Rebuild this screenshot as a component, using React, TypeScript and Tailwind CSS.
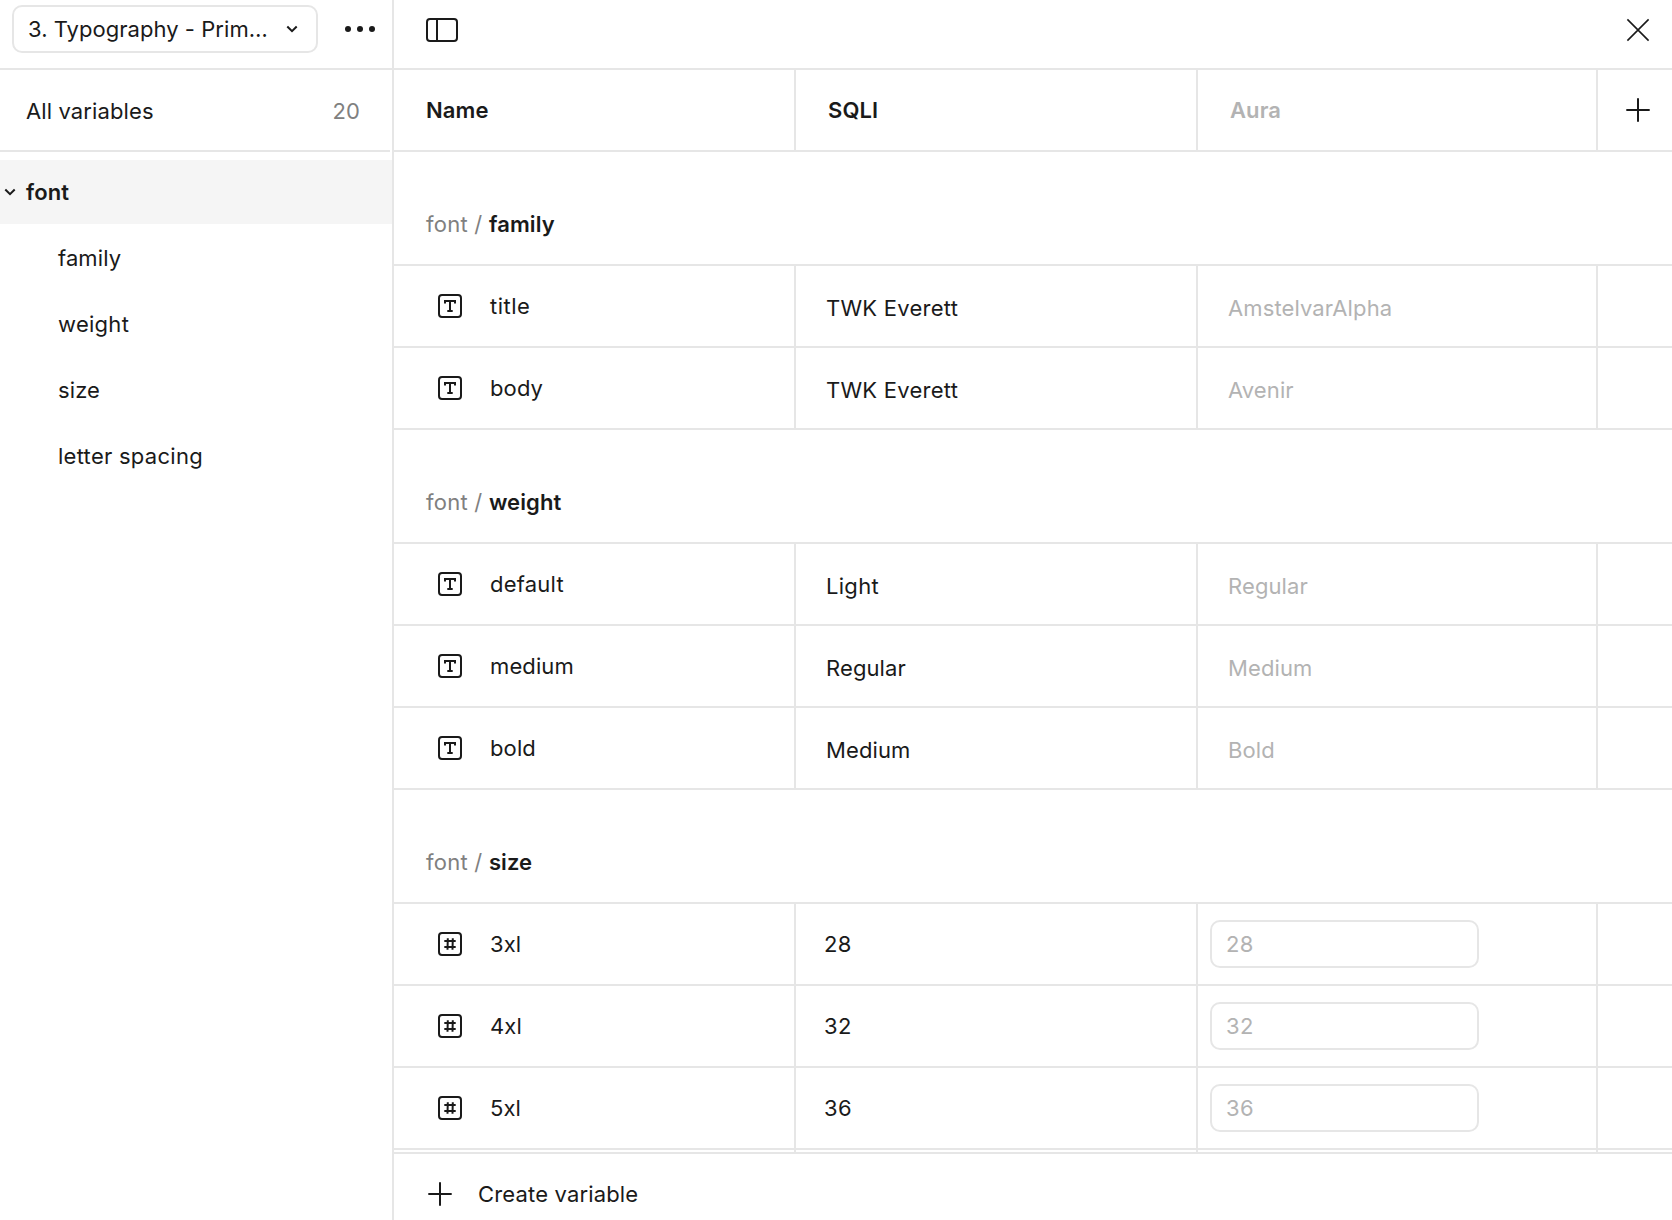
import React from 'react';

type Kind = 'text' | 'number';

interface Variable {
    name: string;
    value: string;
    inherited: string;
    nameClass?: string;
    valueClass?: string;
}

interface Group {
    name: string;
    kind: Kind;
    variables: Variable[];
}

const groups: Group[] = [
    {
        name: 'family',
        kind: 'text',
        variables: [
            {
                name: 'title',
                value: 'TWK Everett',
                inherited: 'AmstelvarAlpha',
                nameClass: 'tracking-[0.5px]',
                valueClass: 'tracking-[0.24px]',
            },
            { name: 'body', value: 'TWK Everett', inherited: 'Avenir', valueClass: 'tracking-[0.24px]' },
        ],
    },
    {
        name: 'weight',
        kind: 'text',
        variables: [
            { name: 'default', value: 'Light', inherited: 'Regular', nameClass: 'tracking-[0.22px]', valueClass: 'tracking-[0.3px]' },
            { name: 'medium', value: 'Regular', inherited: 'Medium' },
            { name: 'bold', value: 'Medium', inherited: 'Bold' },
        ],
    },
    {
        name: 'size',
        kind: 'number',
        variables: [
            { name: '3xl', value: '28', inherited: '28' },
            { name: '4xl', value: '32', inherited: '32' },
            { name: '5xl', value: '36', inherited: '36' },
        ],
    },
];

const sidebarItems = [
    { name: 'family' },
    { name: 'weight', className: 'tracking-[0.28px]' },
    { name: 'size' },
    { name: 'letter spacing', className: 'tracking-[0.27px]' },
];

const ChevronDown: React.FC = () => (
    <svg width="12" height="8" viewBox="0 0 12 8" fill="none" stroke="currentColor" strokeWidth="2">
        <path d="M1.3 1.5 6 6.2l4.7-4.7" />
    </svg>
);

const Plus: React.FC = () => (
    <svg width="24" height="24" viewBox="0 0 24 24" fill="none" stroke="currentColor" strokeWidth="2">
        <path d="M12 .3v23.4M.3 12h23.4" />
    </svg>
);

const KindIcon: React.FC<{ kind: Kind }> = ({ kind }) => (
    <svg width="24" height="24" viewBox="0 0 24 24" fill="none" stroke="currentColor" strokeWidth="2">
        <rect x="1" y="1" width="22" height="22" rx="3" />
        {kind === 'text' ? (
            <path d="M7 9.6V7h10v2.6M12 7v10M9.3 17h5.4" />
        ) : (
            <path d="M6.3 9h11.4M6.3 15h11.4M9.8 6.3l-.3 11.4M14.8 6.3l-.3 11.4" />
        )}
    </svg>
);

const VariableRow: React.FC<{ kind: Kind; variable: Variable }> = ({ kind, variable }) => (
    <div className="flex h-[82px] shrink-0 border-b-2 border-[#e6e6e6]">
        <div className="flex w-[402px] items-center gap-7 border-r-2 border-[#e6e6e6] pl-11">
            <KindIcon kind={kind} />
            <span className={variable.nameClass}>{variable.name}</span>
        </div>
        {kind === 'text' ? (
            <>
                <div className="flex w-[402px] items-center border-r-2 border-[#e6e6e6] pt-1 pl-[30px]">
                    <span className={variable.valueClass}>{variable.value}</span>
                </div>
                <div className="flex w-[400px] items-center border-r-2 border-[#e6e6e6] pt-1 pl-[30px] text-[#b3b3b3]">
                    {variable.inherited}
                </div>
            </>
        ) : (
            <>
                <div className="flex w-[402px] items-center border-r-2 border-[#e6e6e6] pl-7 tracking-[0.3px]">
                    {variable.value}
                </div>
                <div className="flex w-[400px] items-center border-r-2 border-[#e6e6e6] pl-3 text-[#b3b3b3]">
                    <div className="flex h-12 w-[269px] items-center rounded-[10px] border-2 border-[#e6e6e6] pl-3.5 tracking-[0.3px]">
                        {variable.inherited}
                    </div>
                </div>
            </>
        )}
    </div>
);

const Sidebar: React.FC = () => (
    <aside className="flex w-[394px] shrink-0 flex-col border-r-2 border-[#e6e6e6]">
        <div className="h-[70px] border-b-2 border-[#e6e6e6] pt-[5px] pl-3">
            <div className="flex items-center">
                <button className="flex h-12 w-[306px] items-center justify-between rounded-[10px] border-2 border-[#e6e6e6] pr-[18px] pl-3.5">
                    <span className="tracking-[0.04px]">3. Typography - Prim…</span>
                    <ChevronDown />
                </button>
                <svg className="ml-[27px]" width="30" height="6" viewBox="0 0 30 6" fill="currentColor">
                    <circle cx="3" cy="3" r="3" />
                    <circle cx="15" cy="3" r="3" />
                    <circle cx="27" cy="3" r="3" />
                </svg>
            </div>
        </div>
        <div className="mr-0.5 flex h-[82px] items-center justify-between border-b-2 border-[#e6e6e6] pt-0.5 pr-[30px] pl-[26px]">
            <span>All variables</span>
            <span className="text-[#808080]">20</span>
        </div>
        <div className="mt-2 flex h-16 items-center gap-2.5 bg-[#f5f5f5] pl-1 font-semibold">
            <ChevronDown />
            <span>font</span>
        </div>
        {sidebarItems.map((item) => (
            <div key={item.name} className="mt-0.5 flex h-16 items-center pl-[58px]">
                <span className={item.className}>{item.name}</span>
            </div>
        ))}
    </aside>
);

const App: React.FC = () => {
    return (
        <div className="flex h-[1220px] w-[1672px] overflow-hidden bg-white font-[Inter,sans-serif] text-[22px] leading-8 tracking-[0.11px] text-[#1a1a1a]">
            <Sidebar />

            <main className="flex min-w-0 flex-1 flex-col">
                <div className="flex h-[70px] shrink-0 items-center justify-between border-b-2 border-[#e6e6e6] pr-[22px] pb-2 pl-8">
                    <svg width="32" height="24" viewBox="0 0 32 24" fill="none" stroke="currentColor" strokeWidth="2">
                        <rect x="1" y="1" width="30" height="22" rx="3" />
                        <path d="M11 1v22" />
                    </svg>
                    <svg width="24" height="24" viewBox="0 0 24 24" fill="none" stroke="currentColor" strokeWidth="1.6">
                        <path d="m1.4 1.4 21.2 21.2M22.6 1.4 1.4 22.6" />
                    </svg>
                </div>

                <div className="flex h-[82px] shrink-0 border-b-2 border-[#e6e6e6] font-semibold">
                    <div className="flex w-[402px] items-center border-r-2 border-[#e6e6e6] pl-8">Name</div>
                    <div className="flex w-[402px] items-center border-r-2 border-[#e6e6e6] pl-8">SQLI</div>
                    <div className="flex w-[400px] items-center border-r-2 border-[#e6e6e6] pl-8 text-[#b3b3b3]">Aura</div>
                    <div className="flex flex-1 items-center pl-7">
                        <Plus />
                    </div>
                </div>

                <div className="flex min-h-0 flex-1 flex-col overflow-hidden">
                    {groups.map((group) => (
                        <React.Fragment key={group.name}>
                            <div className="flex h-[114px] shrink-0 items-end border-b-2 border-[#e6e6e6] pb-6 pl-8">
                                <span className="whitespace-pre tracking-[0.24px] text-[#808080]">font / </span>
                                <span className="font-semibold">{group.name}</span>
                            </div>
                            {group.variables.map((variable) => (
                                <VariableRow key={variable.name} kind={group.kind} variable={variable} />
                            ))}
                        </React.Fragment>
                    ))}
                    {/* next row, cut off by the footer */}
                    <div className="flex h-0.5 shrink-0">
                        <div className="w-[402px] border-r-2 border-[#e6e6e6]" />
                        <div className="w-[402px] border-r-2 border-[#e6e6e6]" />
                        <div className="w-[400px] border-r-2 border-[#e6e6e6]" />
                    </div>
                </div>

                <div className="flex h-[68px] shrink-0 items-start gap-[26px] border-t-2 border-[#e6e6e6] pt-6 pl-[34px]">
                    <div className="flex h-8 items-center">
                        <Plus />
                    </div>
                    <span className="tracking-[0.16px]">Create variable</span>
                </div>
            </main>
        </div>
    );
};

export default App;
